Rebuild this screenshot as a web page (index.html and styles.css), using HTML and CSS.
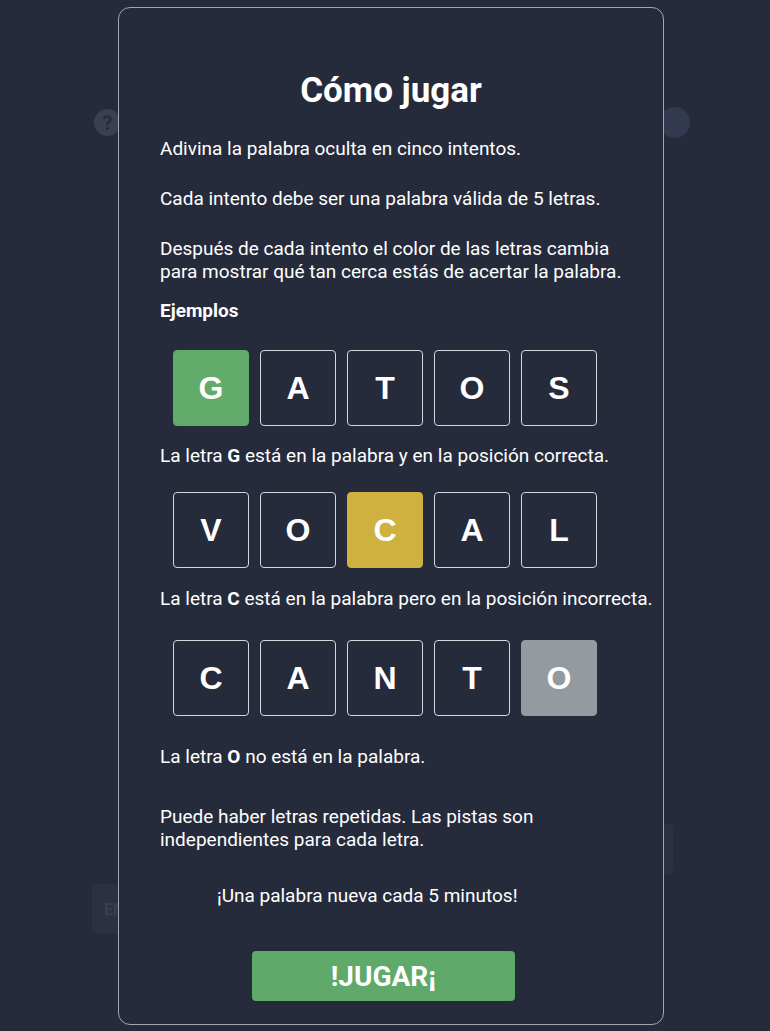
FILE: index.html
```html
<!DOCTYPE html>
<html lang="es">
<head>
<meta charset="utf-8">
<title>Cómo jugar</title>
<link rel="stylesheet" href="styles.css">
</head>
<body>
<div class="page">
  <header class="topbar">
    <span class="help">?</span>
    <span class="avatar"></span>
  </header>
  <div class="keyboard">
    <div class="krow krow-2"><span class="key"></span></div>
    <div class="krow krow-3"><span class="key key-wide">ENVIAR</span></div>
  </div>
</div>

<div class="modal">
  <h1 class="title">Cómo jugar</h1>
  <p class="p p1">Adivina la palabra oculta en cinco intentos.</p>
  <p class="p p2">Cada intento debe ser una palabra válida de 5 letras.</p>
  <p class="p p3">Después de cada intento el color de las letras cambia<br>para mostrar qué tan cerca estás de acertar la palabra.</p>
  <p class="p p4"><strong>Ejemplos</strong></p>

  <div class="tiles t1">
    <span class="tile correct">G</span>
    <span class="tile">A</span>
    <span class="tile">T</span>
    <span class="tile">O</span>
    <span class="tile">S</span>
  </div>
  <p class="p d1">La letra <strong>G</strong> está en la palabra y en la posición correcta.</p>

  <div class="tiles t2">
    <span class="tile">V</span>
    <span class="tile">O</span>
    <span class="tile present">C</span>
    <span class="tile">A</span>
    <span class="tile">L</span>
  </div>
  <p class="p d2">La letra <strong>C</strong> está en la palabra pero en la posición incorrecta.</p>

  <div class="tiles t3">
    <span class="tile">C</span>
    <span class="tile">A</span>
    <span class="tile">N</span>
    <span class="tile">T</span>
    <span class="tile absent">O</span>
  </div>
  <p class="p d3">La letra <strong>O</strong> no está en la palabra.</p>

  <p class="p p5">Puede haber letras repetidas. Las pistas son<br>independientes para cada letra.</p>
  <p class="p p6">¡Una palabra nueva cada 5 minutos!</p>
  <button class="play">!JUGAR¡</button>
</div>
</body>
</html>
```

FILE: styles.css
```css
* { box-sizing: border-box; }
html, body {
  margin: 0;
  padding: 0;
  background: #262b3c;
  height: 1031px;
  overflow: hidden;
  font-family: Roboto, "Liberation Sans", sans-serif;
}
.page {
  height: 1031px;
}
.topbar {
  display: flex;
  justify-content: space-between;
  align-items: center;
  padding: 107px 80px 0 94px;
}
.help {
  width: 27px;
  height: 27px;
  border-radius: 50%;
  background: #3a3f51;
  color: #272c3c;
  font-weight: 700;
  font-size: 20px;
  display: flex;
  align-items: center;
  justify-content: center;
}
.avatar {
  width: 31px;
  height: 31px;
  border-radius: 50%;
  background: #333a4f;
}
.keyboard {
  margin-top: 686px;
  display: flex;
  flex-direction: column;
  gap: 9px;
}
.krow {
  display: flex;
  height: 51px;
}
.krow-2 {
  justify-content: flex-end;
  padding-right: 97px;
}
.krow-3 {
  padding-left: 92px;
  height: 50px;
}
.key {
  width: 60px;
  height: 100%;
  border-radius: 5px;
  background: #2c3043;
}
.key-wide {
  width: 80px;
  padding-left: 12px;
  display: flex;
  align-items: center;
  color: #3a3e50;
  font-weight: 700;
  font-size: 16px;
}

.modal {
  position: fixed;
  left: 118px;
  top: 7px;
  width: 546px;
  height: 1018px;
  border: 1px solid #a3a6ae;
  border-radius: 12px;
  background: #262b3c;
  padding: 62px 41px 0 41px;
  color: #ffffff;
  display: flex;
  flex-direction: column;
  align-items: flex-start;
}
.title {
  align-self: stretch;
  margin: 0;
  text-align: center;
  font-size: 35px;
  line-height: 42px;
  font-weight: 700;
}
.p {
  margin: 0;
  font-size: 19px;
  line-height: 23px;
  white-space: nowrap;
}
.p strong { font-weight: 700; }
.p1 { margin-top: 25px; }
.p2 { margin-top: 27px; }
.p3 { margin-top: 27px; }
.p4 { margin-top: 16px; }
.t1 { margin-top: 28px; }
.d1 { margin-top: 18px; }
.t2 { margin-top: 25px; }
.d2 { margin-top: 19px; }
.t3 { margin-top: 30px; }
.d3 { margin-top: 29px; }
.p5 { margin-top: 37px; }
.p6 { margin-top: 33px; padding-left: 57px; }

.tiles {
  display: flex;
  gap: 11px;
  padding-left: 13px;
}
.tile {
  width: 76px;
  height: 76px;
  border: 1px solid #d4d6db;
  border-radius: 4px;
  display: flex;
  align-items: center;
  justify-content: center;
  font-family: "Liberation Sans", Arial, sans-serif;
  font-weight: 700;
  font-size: 32px;
  color: #ffffff;
}
.tile.correct { background: #62ab6b; border-color: #62ab6b; }
.tile.present { background: #cfb13f; border-color: #cfb13f; }
.tile.absent { background: #939aa0; border-color: #939aa0; }

.play {
  margin-top: 44px;
  margin-left: 92px;
  width: 263px;
  height: 50px;
  border: none;
  border-radius: 4px;
  background: #5fa96a;
  color: #ffffff;
  font-family: Roboto, "Liberation Sans", sans-serif;
  font-weight: 700;
  font-size: 28px;
  padding: 0;
  cursor: pointer;
}
```
